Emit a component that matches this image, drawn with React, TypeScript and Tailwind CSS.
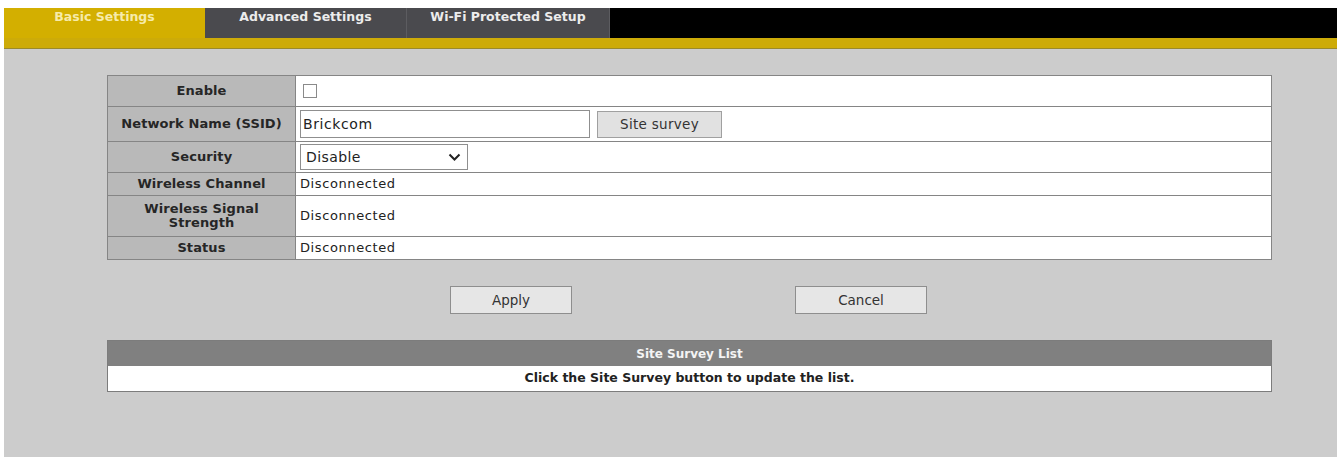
import React from 'react';

const tabs = [
  { label: 'Basic Settings', width: 'w-[201px]', active: true },
  { label: 'Advanced Settings', width: 'w-[202px]', active: false },
  { label: 'Wi-Fi Protected Setup', width: 'w-[203px]', active: false },
];

const statusRows = [
  { label: 'Wireless Channel', h: 'h-[23px]' },
  { label: 'Wireless Signal Strength', h: 'h-[41px]' },
  { label: 'Status', h: 'h-[23px]' },
];

// header cells on the left, white cells on the right
const labelCell =
  'w-[188px] bg-[#b9b9b9] border border-[#858585] text-center align-middle text-[13px] font-bold text-[#262626] leading-[14px] tracking-[0.1px] px-1';
const valueCell =
  'bg-white border border-[#858585] align-middle pl-[4px] text-[13px] tracking-[0.6px] text-[#222]';

const App: React.FC = () => {
  return (
    <div
      className="w-[1343px] h-[462px] bg-white pt-2 pl-1 pr-[6px] pb-[5px]"
      style={{ fontFamily: '"DejaVu Sans", Verdana, sans-serif' }}
    >
      <div className="h-full flex flex-col bg-[#cccccc]">
        {/* Tab bar */}
        <div className="h-[30px] flex bg-gradient-to-r from-[#1e1e1e] via-black to-black">
          {tabs.map((tab) => (
            <div
              key={tab.label}
              className={`${tab.width} flex justify-center pt-[2px] leading-[14px] text-[12.5px] font-bold ${
                tab.active
                  ? 'bg-[#d3af00] text-[#f6ebaa]'
                  : 'bg-[#4a4a4e] text-[#ececec] border-r border-[#5c5c60]'
              }`}
            >
              {tab.label}
            </div>
          ))}
        </div>
        <div className="h-[11px] bg-[#cdab08] border-b border-[#9a8a2c]" />

        {/* Content */}
        <div className="ml-[103px] w-[1165px] pt-[26px]">
          <table className="w-full border-collapse border border-[#7c7c7c]">
            <tbody>
              <tr className="h-[31px]">
                <td className={labelCell}>Enable</td>
                <td className={valueCell}>
                  <div className="ml-[3px] w-[14px] h-[14px] border border-[#8a8a8a] bg-white" />
                </td>
              </tr>
              <tr className="h-[35px]">
                <td className={labelCell}>Network Name (SSID)</td>
                <td className={valueCell}>
                  <div className="flex items-center gap-[7px]">
                    <div className="w-[290px] h-[28px] border border-[#8f8f8f] bg-white flex items-center pl-[2px] text-[14px] tracking-[0.6px] text-[#222]">
                      Brickcom
                    </div>
                    <div className="w-[125px] h-[27px] border border-[#a0a0a0] bg-[#e1e1e1] flex items-center justify-center text-[13.5px] tracking-[0.3px] text-[#333]">
                      Site survey
                    </div>
                  </div>
                </td>
              </tr>
              <tr className="h-[31px]">
                <td className={labelCell}>Security</td>
                <td className={valueCell}>
                  <div className="w-[168px] h-[26px] border border-[#8f8f8f] bg-white flex items-center justify-between pl-[5px] pr-[6px] text-[14px] tracking-[0.4px] text-[#222]">
                    <span>Disable</span>
                    <svg width="13" height="9" viewBox="0 0 13 9" fill="none">
                      <path d="M1.5 1.5 L6.5 6.5 L11.5 1.5" stroke="#222" strokeWidth="2" />
                    </svg>
                  </div>
                </td>
              </tr>
              {statusRows.map((row) => (
                <tr key={row.label} className={row.h}>
                  <td className={labelCell}>
                    {row.label === 'Wireless Signal Strength' ? (
                      <>
                        Wireless Signal
                        <br />
                        Strength
                      </>
                    ) : (
                      row.label
                    )}
                  </td>
                  <td className={`${valueCell} pl-[2px]`}>Disconnected</td>
                </tr>
              ))}
            </tbody>
          </table>

          {/* Buttons */}
          <div className="flex justify-center gap-[223px] mt-[26px] pr-[2px]">
            <div className="w-[122px] h-[28px] border border-[#8e8e8e] bg-[#e6e6e6] flex items-center justify-center text-[13.5px] text-[#333]">
              Apply
            </div>
            <div className="w-[132px] h-[28px] border border-[#8e8e8e] bg-[#e6e6e6] flex items-center justify-center text-[13.5px] text-[#333]">
              Cancel
            </div>
          </div>

          {/* Site survey list */}
          <div className="mt-[26px] border border-[#7c7c7c]">
            <div className="h-[25px] bg-[#808080] flex items-center justify-center text-[12px] font-bold text-[#f4f4f4]">
              Site Survey List
            </div>
            <div className="h-[25px] bg-white flex items-center justify-center text-[12.5px] font-bold text-[#222]">
              Click the Site Survey button to update the list.
            </div>
          </div>
        </div>
      </div>
    </div>
  );
};

export default App;
